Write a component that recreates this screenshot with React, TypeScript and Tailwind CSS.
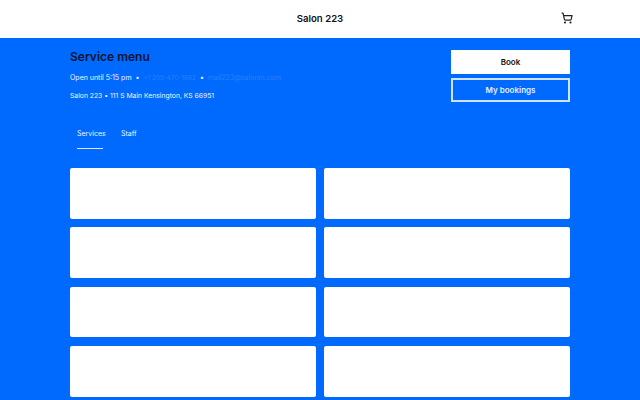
import { ShoppingCart } from "lucide-react";

export default function App() {
  return (
    <div className="h-[400px] w-[640px] overflow-hidden bg-[#006aff] font-['Inter',sans-serif]">
      <header className="relative flex h-[38px] items-center justify-center bg-white">
        <span className="text-[9.6px] font-semibold text-[#111]">Salon 223</span>
        <ShoppingCart className="absolute right-[67px] top-[12px] h-[12px] w-[12px] text-[#222]" strokeWidth={2.4} />
      </header>
      <main className="px-[70px]">
        <div className="flex justify-between">
          <div>
            <h1 className="mt-[11px] text-[12px] font-semibold leading-[16px] text-[#0a1230]">Service menu</h1>
            <div className="mt-[8px] flex items-center text-[7px] leading-[10px] text-[#eef5ff]">
              <span>Open until 5:15 pm</span>
              <span className="ml-[4px]">•</span>
              <span className="ml-[4px] text-[6.4px] text-[#2a80ff]">+1 205-470-1662</span>
              <span className="ml-[4px]">•</span>
              <span className="ml-[4px] text-[#2a80ff]">mail223@salonm.com</span>
            </div>
            <p className="mt-[8px] text-[6.8px] leading-[10px] text-[#eef5ff]">Salon 223 • 111 S Main Kensington, KS 66951</p>
          </div>
          <div className="mt-[12px] flex w-[119px] flex-col gap-[4px]">
            <button className="flex h-[24px] items-center justify-center bg-white pb-[1px] text-[8px] font-semibold text-[#111]">Book</button>
            <button className="flex h-[24px] items-center justify-center border-2 border-[#cfe3ff] pb-[1px] text-[8px] font-semibold text-[#e6f0ff]">My bookings</button>
          </div>
        </div>
        <nav className="mt-[27px] flex gap-[18px] pl-[7px] text-[7px] leading-[10px] text-[#eef5ff]">
          <span className="w-[26px] border-b border-[#dbe9ff] pb-[9px] text-center">Services</span>
          <span>Staff</span>
        </nav>
        <section className="mt-[19px] grid grid-cols-2 gap-x-[8px] gap-y-[8.67px]">
          {Array.from({ length: 8 }).map((_, i) => (
            <div key={i} className="h-[50.67px] rounded-[2px] bg-white" />
          ))}
        </section>
      </main>
    </div>
  );
}
